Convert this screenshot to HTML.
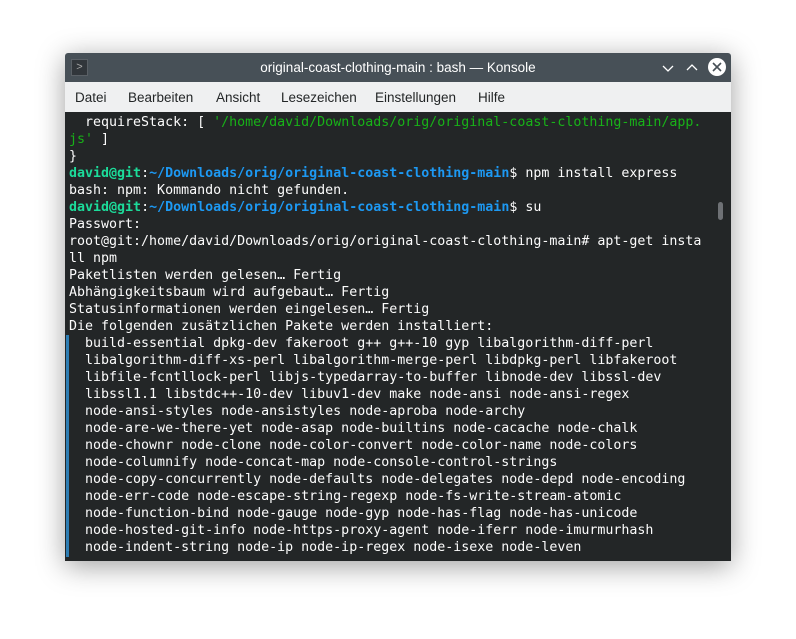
<!DOCTYPE html>
<html><head><meta charset="utf-8"><style>
body{margin:0;width:796px;height:639px;background:#fff;position:relative;overflow:hidden;font-family:"Liberation Sans","DejaVu Sans",sans-serif}
.win{position:absolute;left:65px;top:53px;width:666px;height:508px;box-shadow:0 5px 28px rgba(0,0,0,.38);border-radius:3px 3px 0 0;overflow:hidden}
.title{height:29px;background:#475057;color:#fff;font-size:13.5px;text-align:center;line-height:29px;position:relative}
.menu{height:30px;background:#eff0f1;font-size:13.5px;color:#232627;line-height:32px}
.menu span{position:absolute}
.term{position:absolute;top:59px;left:0;right:0;bottom:0;background:#232627}
pre{margin:0;position:absolute;left:4px;top:2px;font-family:"DejaVu Sans Mono",monospace;font-size:13.3px;line-height:17px;color:#fcfcfc}
.g{color:#11d116}.gb{color:#1cdc9a;font-weight:bold}.b{color:#1d99f3;font-weight:bold}.gr{color:#18b218}
</style></head><body>
<div class="win">
<div class="title">
<div style="position:absolute;left:6px;top:6px;width:17px;height:17px;background:#31363b;border:1px solid #5a6066;box-sizing:border-box;color:#aaa;font-size:11px;line-height:15px">&gt;</div>
original-coast-clothing-main : bash — Konsole
<svg style="position:absolute;left:596px;top:8px" width="14" height="14"><path d="M2 5 L7 10 L12 5" stroke="#fff" fill="none" stroke-width="1.3"/></svg>
<svg style="position:absolute;left:620px;top:7px" width="14" height="14"><path d="M2 10 L7 5 L12 10" stroke="#fff" fill="none" stroke-width="1.3"/></svg>
<svg style="position:absolute;left:642px;top:4px" width="20" height="20"><circle cx="10" cy="10" r="9" fill="#fff"/><path d="M6 6 L14 14 M14 6 L6 14" stroke="#475057" stroke-width="1.6"/></svg>
</div>
<div class="menu"><span style="left:10px">Datei</span><span style="left:63px">Bearbeiten</span><span style="left:151px">Ansicht</span><span style="left:216px">Lesezeichen</span><span style="left:310px">Einstellungen</span><span style="left:413px">Hilfe</span></div>
<div class="term">
<div style="position:absolute;left:1px;top:223px;width:3px;height:222px;background:#2d7db3"></div>
<div style="position:absolute;left:653px;top:90px;width:5px;height:18px;border-radius:3px;background:#6e7175"></div>
<pre>  requireStack: [ <span class="gr">'/home/david/Downloads/orig/original-coast-clothing-main/app.</span>
<span class="gr">js'</span> ]
}
<span class="gb">david@git</span>:<span class="b">~/Downloads/orig/original-coast-clothing-main</span>$ npm install express
bash: npm: Kommando nicht gefunden.
<span class="gb">david@git</span>:<span class="b">~/Downloads/orig/original-coast-clothing-main</span>$ su
Passwort:
root@git:/home/david/Downloads/orig/original-coast-clothing-main# apt-get insta
ll npm
Paketlisten werden gelesen… Fertig
Abhängigkeitsbaum wird aufgebaut… Fertig
Statusinformationen werden eingelesen… Fertig
Die folgenden zusätzlichen Pakete werden installiert:
  build-essential dpkg-dev fakeroot g++ g++-10 gyp libalgorithm-diff-perl
  libalgorithm-diff-xs-perl libalgorithm-merge-perl libdpkg-perl libfakeroot
  libfile-fcntllock-perl libjs-typedarray-to-buffer libnode-dev libssl-dev
  libssl1.1 libstdc++-10-dev libuv1-dev make node-ansi node-ansi-regex
  node-ansi-styles node-ansistyles node-aproba node-archy
  node-are-we-there-yet node-asap node-builtins node-cacache node-chalk
  node-chownr node-clone node-color-convert node-color-name node-colors
  node-columnify node-concat-map node-console-control-strings
  node-copy-concurrently node-defaults node-delegates node-depd node-encoding
  node-err-code node-escape-string-regexp node-fs-write-stream-atomic
  node-function-bind node-gauge node-gyp node-has-flag node-has-unicode
  node-hosted-git-info node-https-proxy-agent node-iferr node-imurmurhash
  node-indent-string node-ip node-ip-regex node-isexe node-leven</pre>
</div>
</div>
</body></html>
